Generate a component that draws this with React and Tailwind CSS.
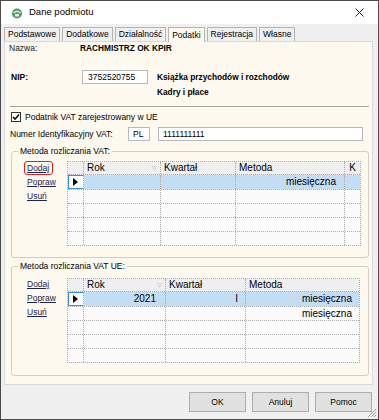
import React from 'react';

function Tab({ label, active }) {
  return (
    <div
      className={
        active
          ? 'relative z-10 -mb-px flex h-[15px] items-center border border-b-0 border-[#b4b4b4] bg-[#fdf9ef] px-[3px] text-[8.5px] leading-none'
          : 'flex h-[14px] items-center border border-b-0 border-[#b4b4b4] bg-[#f0f0f0] px-[3px] text-[8.5px] leading-none'
      }
    >
      {label}
    </div>
  );
}

function Arrow() {
  return (
    <svg width="5" height="8" viewBox="0 0 5 8">
      <path d="M0 0 L5 4 L0 8 Z" fill="#000" />
    </svg>
  );
}

function Link({ children }) {
  return <div className="h-[14px] leading-[14px] text-[8.5px] text-[#1b2550] underline underline-offset-[1px]">{children}</div>;
}

function GroupBox({ title, children, className }) {
  return (
    <div className={'relative rounded-[3px] border border-[#d3cec2] ' + className}>
      <div className="absolute left-[6px] top-[-6px] bg-[#fdf9ef] px-[2px] text-[8.5px] leading-[11px]">{title}</div>
      {children}
    </div>
  );
}

const cellB = 'border-r border-dotted border-[#a8a8a8]';

function Grid1() {
  const rows = [0, 1, 2, 3, 4];
  return (
    <div className="w-[294px] border border-dotted border-[#a8a8a8] bg-[#fbfbfb] font-['Liberation_Sans',Arial,sans-serif] text-[10px] leading-none">
      <div className="flex h-[13px] border-b border-dotted border-[#a8a8a8] bg-[#efefef]">
        <div className={'w-[16px] ' + cellB} />
        <div className={'flex w-[77px] items-center justify-between pl-[3px] pr-[3px] ' + cellB}>
          <span>Rok</span>
          <span className="text-[6px] text-[#b0b0b0]">▽</span>
        </div>
        <div className={'flex w-[75px] items-center pl-[3px] ' + cellB}>Kwartał</div>
        <div className={'flex w-[109px] items-center pl-[3px] ' + cellB}>Metoda</div>
        <div className="flex w-[15px] items-center justify-center">K</div>
      </div>
      {rows.map((r) => (
        <div
          key={r}
          className={
            r === 0
              ? 'flex h-[15px] border-b border-dotted border-[#a8a8a8] shadow-[inset_0_0_0_1px_#3a8ee0]'
              : r === 4
              ? 'flex h-[13px]'
              : 'flex h-[14px] border-b border-dotted border-[#a8a8a8]'
          }
        >
          <div className={'flex w-[16px] items-center pl-[5px] ' + cellB}>{r === 0 ? <Arrow /> : null}</div>
          <div className={'w-[77px] ' + cellB + (r === 0 ? ' bg-[#c3ddf5]' : '')} />
          <div className={'w-[75px] ' + cellB + (r === 0 ? ' bg-[#c3ddf5]' : '')} />
          <div className={'flex w-[109px] items-center justify-end pr-[8px] ' + cellB + (r === 0 ? ' bg-[#c3ddf5]' : '')}>
            {r === 0 ? 'miesięczna' : ''}
          </div>
          <div className={'w-[15px]' + (r === 0 ? ' bg-[#c3ddf5]' : '')} />
        </div>
      ))}
    </div>
  );
}

function Grid2() {
  const rows = [0, 1, 2, 3, 4];
  return (
    <div className="w-[293px] border border-dotted border-[#a8a8a8] bg-[#fbfbfb] font-['Liberation_Sans',Arial,sans-serif] text-[10px] leading-none">
      <div className="flex h-[13px] border-b border-dotted border-[#a8a8a8] bg-[#efefef]">
        <div className={'w-[16px] ' + cellB} />
        <div className={'flex w-[82px] items-center justify-between pl-[3px] pr-[3px] ' + cellB}>
          <span>Rok</span>
          <span className="text-[6px] text-[#b0b0b0]">▽</span>
        </div>
        <div className={'flex w-[80px] items-center pl-[3px] ' + cellB}>Kwartał</div>
        <div className="flex w-[113px] items-center pl-[3px]">Metoda</div>
      </div>
      {rows.map((r) => (
        <div
          key={r}
          className={
            r === 0
              ? 'flex h-[15px] border-b border-dotted border-[#a8a8a8] shadow-[inset_0_0_0_1px_#3a8ee0]'
              : r === 4
              ? 'flex h-[13px]'
              : 'flex h-[14px] border-b border-dotted border-[#a8a8a8]'
          }
        >
          <div className={'flex w-[16px] items-center pl-[5px] ' + cellB}>{r === 0 ? <Arrow /> : null}</div>
          <div className={'flex w-[82px] items-center justify-end pr-[9px] ' + cellB + (r === 0 ? ' bg-[#c3ddf5]' : '')}>
            {r === 0 ? '2021' : ''}
          </div>
          <div className={'flex w-[80px] items-center justify-end pr-[7px] ' + cellB + (r === 0 ? ' bg-[#c3ddf5]' : '')}>
            {r === 0 ? 'I' : ''}
          </div>
          <div className={'flex w-[113px] items-center justify-end pr-[7px]' + (r === 0 ? ' bg-[#c3ddf5]' : '')}>
            {r === 0 || r === 1 ? 'miesięczna' : ''}
          </div>
        </div>
      ))}
    </div>
  );
}

function Button({ children }) {
  return (
    <div className="flex h-[20px] w-[57px] items-center justify-center border border-[#adadad] bg-[#e1e1e1] text-[8.5px]">
      {children}
    </div>
  );
}

export default function App() {
  return (
    <div className="relative flex h-[420px] w-[379px] flex-col border border-[#4b4b4b] bg-[#f0f0f0] font-['Liberation_Sans',Arial,sans-serif] text-black">
      {/* Title bar */}
      <div className="flex h-[23px] items-center bg-white pl-[10px] pr-[14px]">
        <svg width="12" height="12" viewBox="0 0 12 12">
          <circle cx="6" cy="6.5" r="5" fill="#4f9a5a" />
          <path d="M2.5 6 Q6 2.5 9.5 6" stroke="#d8eed8" strokeWidth="1.4" fill="none" />
          <rect x="4" y="7" width="4" height="2.5" fill="#e8f3e8" />
        </svg>
        <span className="ml-[6px] text-[9.5px]">Dane podmiotu</span>
        <div className="flex-1" />
        <svg width="9" height="9" viewBox="0 0 9 9">
          <path d="M0.5 0.5 L8.5 8.5 M8.5 0.5 L0.5 8.5" stroke="#222" strokeWidth="1" />
        </svg>
      </div>

      {/* Tabs */}
      <div className="flex items-end gap-[2px] pl-[3px] pt-[3px]">
        <Tab label="Podstawowe" />
        <Tab label="Dodatkowe" />
        <Tab label="Działalność" />
        <Tab label="Podatki" active />
        <Tab label="Rejestracja" />
        <Tab label="Własne" />
      </div>

      {/* Panel */}
      <div className="ml-[3px] flex h-[344px] w-[369px] flex-col border border-[#d9d9d9] bg-[#fdf9ef] text-[8.5px]">
        <div className="flex h-[12px] items-center">
          <span className="ml-[4px] w-[71px] text-[#222]">Nazwa:</span>
          <span className="text-[8.3px] font-bold">RACHMISTRZ OK KPIR</span>
        </div>
        <div className="mt-[16px] flex h-[14px] items-center">
          <span className="ml-[6px] w-[71px] font-bold">NIP:</span>
          <div className="flex h-[14px] w-[66px] items-center border border-[#b8b8b8] bg-white pl-[5px]">3752520755</div>
          <span className="ml-[9px] text-[8.3px] font-bold">Książka przychodów i rozchodów</span>
        </div>
        <div className="mt-[2px] flex h-[12px] items-center">
          <span className="ml-[152px] text-[8.3px] font-bold">Kadry i płace</span>
        </div>
        <div className="ml-[5px] mt-[8px] h-px w-[359px] bg-[#a7a39a] shadow-[0_1px_0_#ffffff]" />
        <div className="mt-[4px] flex h-[12px] items-center">
          <div className="ml-[6px] flex h-[10px] w-[10px] items-center justify-center border border-[#333] bg-white">
            <svg width="8" height="8" viewBox="0 0 8 8">
              <path d="M1 4 L3 6.2 L7 1.5" stroke="#000" strokeWidth="1.5" fill="none" />
            </svg>
          </div>
          <span className="ml-[4px]">Podatnik VAT zarejestrowany w UE</span>
        </div>
        <div className="mt-[4px] flex h-[14px] items-center">
          <span className="ml-[5px] w-[118px]">Numer Identyfikacyjny VAT:</span>
          <div className="flex h-[14px] w-[22px] items-center border border-[#b8b8b8] bg-white pl-[4px]">PL</div>
          <div className="ml-[8px] flex h-[14px] w-[205px] items-center border border-[#b8b8b8] bg-white pl-[4px]">1111111111</div>
        </div>

        <GroupBox title="Metoda rozliczania VAT:" className="ml-[6px] mt-[10px] h-[107px] w-[358px]">
          <div className="flex pt-[9px]">
            <div className="w-[55px] pl-[15px]">
              <div className="relative">
                <Link>Dodaj</Link>
                <span className="absolute left-[-3px] top-0 h-[14px] w-[29px] rounded-[3px] border-[1.5px] border-[#e0201c]" />
              </div>
              <Link>Popraw</Link>
              <Link>Usuń</Link>
            </div>
            <Grid1 />
          </div>
        </GroupBox>

        <GroupBox title="Metoda rozliczania VAT UE:" className="ml-[6px] mt-[8px] h-[110px] w-[358px]">
          <div className="flex">
            <div className="w-[55px] pl-[15px] pt-[10px]">
              <Link>Dodaj</Link>
              <Link>Popraw</Link>
              <Link>Usuń</Link>
            </div>
            <div className="pt-[11px]">
              <Grid2 />
            </div>
          </div>
        </GroupBox>
      </div>

      {/* Buttons */}
      <div className="mt-[7px] flex justify-end gap-[6px] pr-[6px]">
        <Button>OK</Button>
        <Button>Anuluj</Button>
        <Button>Pomoc</Button>
      </div>

      <svg className="absolute bottom-[1px] right-[1px]" width="11" height="11" viewBox="0 0 11 11">
        <path d="M10 2 L2 10 M10 5 L5 10 M10 8 L8 10" stroke="#a0a0a0" strokeWidth="1" />
      </svg>
    </div>
  );
}
